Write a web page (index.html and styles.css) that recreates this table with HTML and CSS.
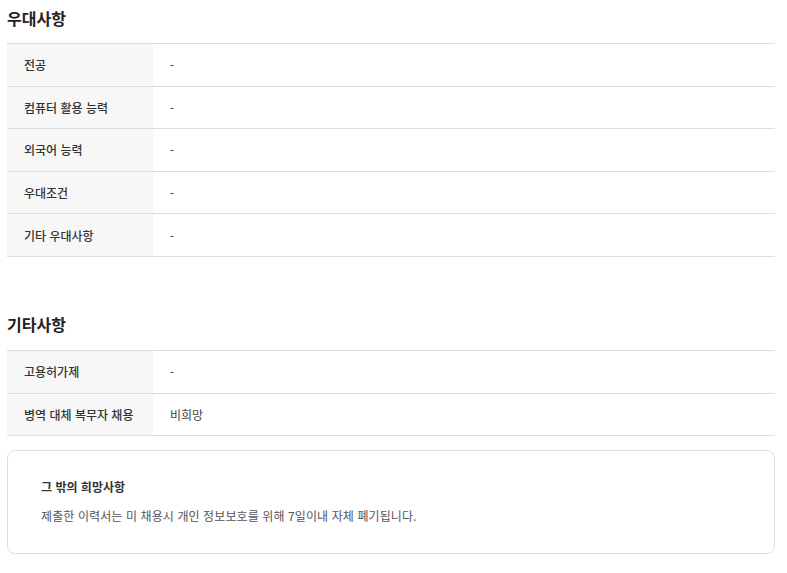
FILE: index.html
```html
<!DOCTYPE html>
<html lang="ko">
<head>
  <meta charset="UTF-8" />
  <title>우대사항</title>
  <link rel="stylesheet" href="styles.css">
</head>
<body>

<div class="container">
  <!-- 우대사항 -->
  <section class="section">
    <h3 class="section-title">우대사항</h3>
    <div class="info-table">
      <div class="row"><div class="label">전공</div><div class="value">-</div></div>
      <div class="row"><div class="label">컴퓨터 활용 능력</div><div class="value">-</div></div>
      <div class="row"><div class="label">외국어 능력</div><div class="value">-</div></div>
      <div class="row"><div class="label">우대조건</div><div class="value">-</div></div>
      <div class="row"><div class="label">기타 우대사항</div><div class="value">-</div></div>
    </div>
  </section>

  <!-- 기타사항 -->
  <section class="section etc">
    <h3 class="section-title">기타사항</h3>
    <div class="info-table">
      <div class="row"><div class="label">고용허가제</div><div class="value">-</div></div>
      <div class="row"><div class="label">병역 대체 복무자 채용</div><div class="value">비희망</div></div>
    </div>

    <div class="wish-box">
      <div class="wish-title">그 밖의 희망사항</div>
      <p class="wish-text">제출한 이력서는 미 채용시 개인 정보보호를 위해 7일이내 자체 폐기됩니다.</p>
    </div>
  </section>
</div>

</body>
</html>
```

FILE: styles.css
```css
body {
  font-family: 'Noto Sans CJK KR', 'Noto Sans', sans-serif;
  background-color: #fff;
  color: #333;
  margin: 0;
  padding: 0;
}

.container {
  width: 768px;
  margin: 0 0 0 7px;
}

.section-title {
  font-size: 16px;
  font-weight: bold;
  color: #222;
  margin: 0;
  height: 43px;
  line-height: 36px;
}

.etc {
  margin-top: 49px;
}

.etc .section-title {
  height: 44px;
}

.info-table {
  border-top: 1px solid #ddd;
}

.row {
  display: flex;
  height: 42.6px;
  box-sizing: border-box;
  border-bottom: 1px solid #ddd;
  font-size: 12px;
}

.label {
  width: 146px;
  box-sizing: border-box;
  background-color: #f7f7f7;
  padding-left: 17px;
  display: flex;
  align-items: center;
  font-weight: 500;
  color: #333;
}

.value {
  padding-left: 17px;
  display: flex;
  align-items: center;
  color: #444;
}

.wish-box {
  margin-top: 14px;
  border: 1px solid #ddd;
  border-radius: 8px;
  height: 104px;
  box-sizing: border-box;
  padding: 27px 33px 0;
}

.wish-title {
  font-size: 12px;
  font-weight: bold;
  color: #333;
  line-height: 18px;
}

.wish-text {
  margin: 11px 0 0;
  font-size: 12px;
  letter-spacing: 0.1px;
  color: #555;
  line-height: 18px;
}
```
